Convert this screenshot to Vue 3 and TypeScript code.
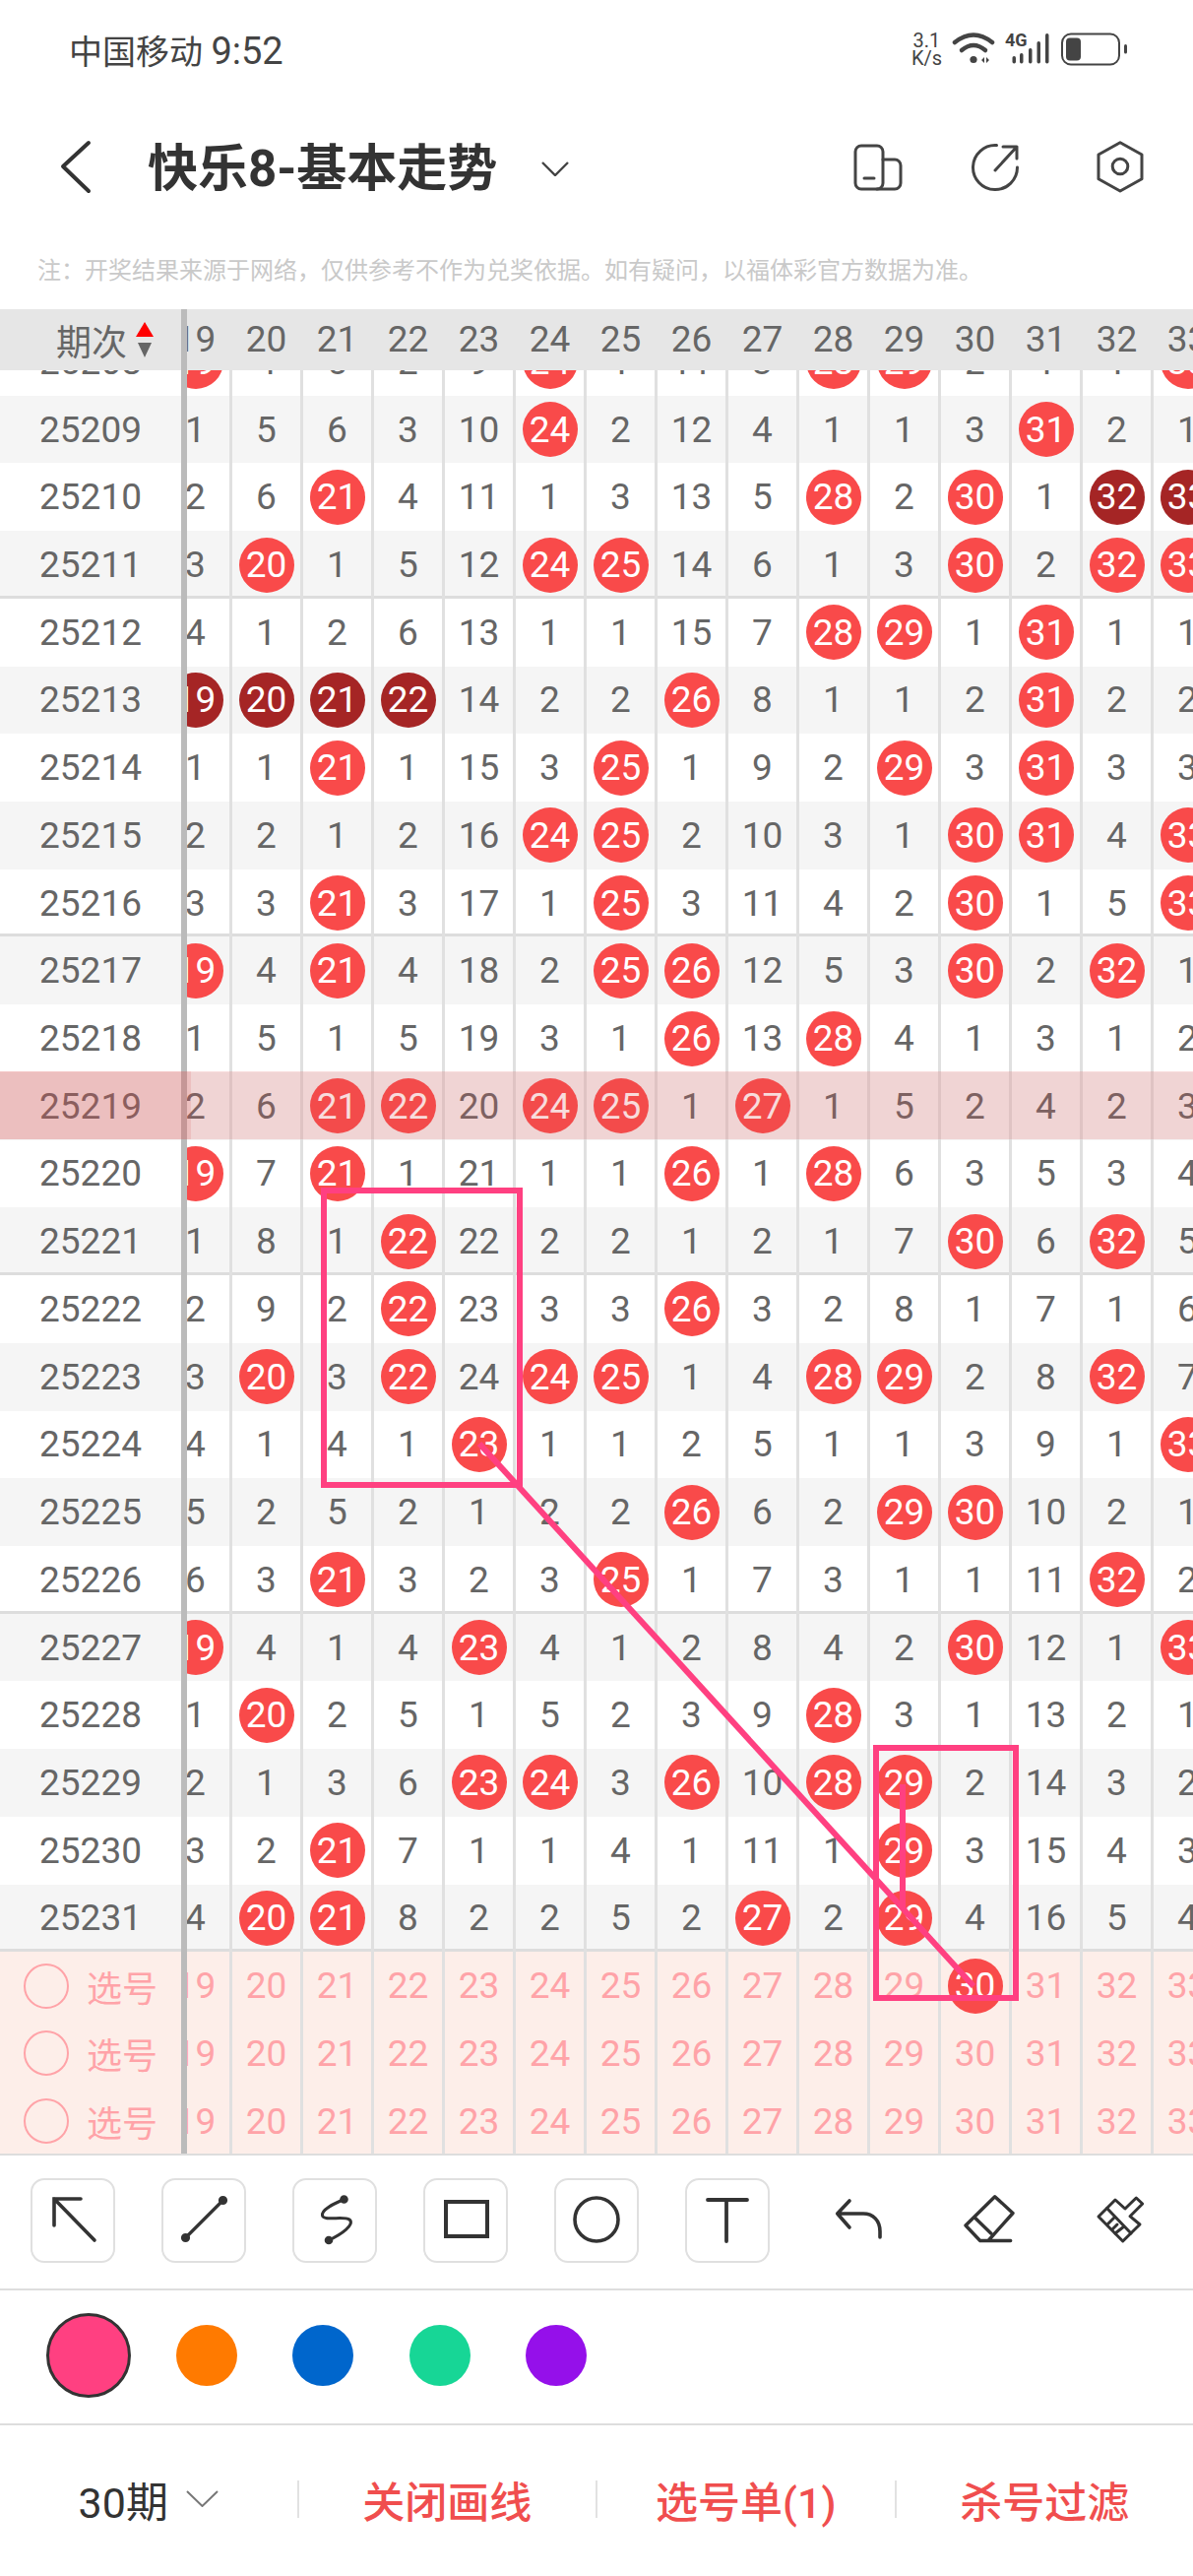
<template>
  <div class="page">
    <!-- status bar -->
    <div class="status">
      <span class="carrier">中国移动 <span class="clock">9:52</span></span>
      <div class="status-right">
        <div class="speed"><span>3.1</span><span>K/s</span></div>
        <svg class="wifi" width="46" height="40" viewBox="58 10 46 40">
          <path d="M62 23 Q81 8 100 23" fill="none" stroke="#444" stroke-width="4.5" stroke-linecap="round" />
          <path d="M69 31 Q81 21 93 31" fill="none" stroke="#444" stroke-width="4.5" stroke-linecap="round" />
          <circle cx="81" cy="40.5" r="3.6" fill="#444" />
          <path d="M89 41 l3 -3 v6z M94 38 l3 3 l-3 3z" fill="#444" />
        </svg>
        <svg class="signal" width="128" height="38" viewBox="1020 30 128 38">
          <text x="1021" y="46" class="net">4G</text>
          <g fill="#444">
            <rect x="1028.5" y="56" width="3.5" height="7.5" rx="1.7" />
            <rect x="1036" y="53" width="3.5" height="10.5" rx="1.7" />
            <rect x="1045" y="48" width="3.5" height="15.5" rx="1.7" />
            <rect x="1053.5" y="41" width="3.5" height="22.5" rx="1.7" />
            <rect x="1062" y="33" width="3.5" height="30.5" rx="1.7" />
          </g>
          <rect x="1079" y="33.5" width="58" height="31" rx="9" fill="none" stroke="#444" stroke-width="2" />
          <rect x="1083" y="37.5" width="15" height="23" rx="4" fill="#444" />
          <rect x="1142" y="44" width="3" height="9.5" rx="1.5" fill="#444" />
        </svg>
      </div>
    </div>

    <!-- nav bar -->
    <div class="nav">
      <svg class="back" width="36" height="60" viewBox="0 0 36 60">
        <path d="M32 5 L6 29 L32 54" fill="none" stroke="#333" stroke-width="4" stroke-linecap="round" stroke-linejoin="round" />
      </svg>
      <h1 class="title">快乐8-基本走势</h1>
      <svg class="title-caret" width="28" height="15" viewBox="0 0 28 15">
        <path d="M1 1 L14 14 L27 1" fill="none" stroke="#444" stroke-width="2.4" />
      </svg>
      <div class="nav-icons">
        <svg width="60" height="60" viewBox="0 0 60 60" fill="none" stroke="#444" stroke-width="3" stroke-linecap="round">
          <rect x="7" y="8" width="28" height="44" rx="6" />
          <path d="M35 22 H47 a6 6 0 0 1 6 6 V46 a6 6 0 0 1 -6 6 H29" />
          <path d="M16 41 h10" />
        </svg>
        <svg width="60" height="60" viewBox="0 0 60 60" fill="none" stroke="#444" stroke-width="3" stroke-linecap="round" stroke-linejoin="round">
          <path d="M31.5 7.6 A22.5 22.5 0 1 0 52.5 30" />
          <path d="M30 33 L52 9 M38 9 H52 V21" />
        </svg>
        <svg class="hex" width="60" height="60" viewBox="0 0 60 60" fill="none" stroke="#444" stroke-width="3" stroke-linejoin="round">
          <path d="M30 4.7 L52 17 V41.7 L30 54 L8 41.7 V17Z" />
          <circle cx="30" cy="29" r="7.8" />
        </svg>
      </div>
    </div>

    <p class="note">注&#xFF1A;开奖结果来源于网络&#xFF0C;仅供参考不作为兑奖依据。如有疑问&#xFF0C;以福体彩官方数据为准。</p>

    <!-- table header -->
    <div class="thead">
      <div class="thead-left">
        <span>期次</span>
        <svg width="18" height="38" viewBox="0 0 18 38">
          <path d="M9 1 L18 16 H0Z" fill="#f00" />
          <path d="M2 22 H16 L9 37Z" fill="#666" />
        </svg>
      </div>
      <div class="thead-nums">
        <span v-for="n in columns" :key="n" class="head-num">{{ n }}</span>
      </div>
    </div>

    <!-- table body, scrolled a bit so the first row is cut off -->
    <div class="grid">
      <div class="frozen">
        <div class="scrolled">
          <div
            v-for="(r, i) in rows"
            :key="r.id"
            class="row fz-cell"
            :class="{ zebra: i % 2 === 1, fifth: r.line }"
          >{{ r.id }}</div>
          <div v-for="p in 3" :key="p" class="row fz-cell pick">
            <span class="pick-ring"></span>
            <span>选号</span>
          </div>
        </div>
      </div>
      <div class="track">
        <div class="scrolled inner">
          <div
            v-for="(r, i) in rows"
            :key="r.id"
            class="row"
            :class="{ zebra: i % 2 === 1, fifth: r.line }"
          >
            <div v-for="c in r.cells" :key="c.col" class="cell">
              <span v-if="c.kind" class="ball" :class="c.kind">{{ c.text }}</span>
              <template v-else>{{ c.text }}</template>
            </div>
          </div>
          <div v-for="p in 3" :key="p" class="row pick">
            <div v-for="n in columns" :key="n" class="cell">
              <span v-if="p === 1 && n === 30" class="ball red">{{ n }}</span>
              <template v-else>{{ n }}</template>
            </div>
          </div>
        </div>
      </div>

      <!-- highlighted draw 25219 -->
      <div class="hl" :style="{ top: hlTop + 'px' }"></div>
      <div class="hl hl-left" :style="{ top: hlTop + 'px' }"></div>

      <!-- what the user drew on the chart -->
      <svg class="drawing" width="1212" height="1811" viewBox="0 376 1212 1811" fill="none" stroke="#ff4081" stroke-width="6">
        <rect x="329" y="1209" width="199" height="299" />
        <rect x="890" y="1775" width="142" height="254" />
        <path d="M487 1466 L989 2017" />
        <path d="M917 1812 V1937" />
      </svg>
    </div>

    <!-- drawing tools -->
    <div class="tools">
      <div class="tool boxed">
        <svg width="86" height="86" viewBox="0 0 86 86" fill="none" stroke="#333" stroke-width="3.6" stroke-linecap="round">
          <path d="M24 48 V21 H51 M24 21 L65 63" />
        </svg>
      </div>
      <div class="tool boxed">
        <svg width="86" height="86" viewBox="0 0 86 86" fill="none" stroke="#333" stroke-width="3.2">
          <path d="M62.5 22.5 L24.5 60.5" />
          <circle cx="62.5" cy="22.5" r="3" fill="#333" />
          <circle cx="24.5" cy="60.5" r="3" fill="#333" />
        </svg>
      </div>
      <div class="tool boxed">
        <svg width="86" height="86" viewBox="0 0 86 86" fill="none" stroke="#333" stroke-width="3">
          <path d="M52.5 21.5 C42 26 29 32 30.5 38 C32 44 52 38 58 42 C64 47 50 57 37 63" />
          <circle cx="52.5" cy="21.5" r="2.8" fill="#333" />
          <circle cx="37" cy="63" r="2.8" fill="#333" />
        </svg>
      </div>
      <div class="tool boxed">
        <svg width="86" height="86" viewBox="0 0 86 86" fill="none" stroke="#333" stroke-width="4">
          <rect x="23" y="24" width="42" height="35" />
        </svg>
      </div>
      <div class="tool boxed">
        <svg width="86" height="86" viewBox="0 0 86 86" fill="none" stroke="#333" stroke-width="3.6">
          <circle cx="43" cy="42" r="22" />
        </svg>
      </div>
      <div class="tool boxed">
        <svg width="86" height="86" viewBox="0 0 86 86" fill="none" stroke="#333" stroke-width="3.8" stroke-linecap="round">
          <path d="M23 22 H63 M42 22 V64" />
        </svg>
      </div>
      <div class="tool">
        <svg width="86" height="86" viewBox="0 0 86 86" fill="none" stroke="#333" stroke-width="3.6" stroke-linecap="round" stroke-linejoin="round">
          <path d="M34 23 L21.7 36 L34 50 M21.7 36 H48 C58 36 65 43 65 54 V60" />
        </svg>
      </div>
      <div class="tool">
        <svg width="86" height="86" viewBox="0 0 86 86" fill="none" stroke="#333" stroke-width="3.4" stroke-linecap="round" stroke-linejoin="round">
          <path d="M33.7 63.5 L19 48 L48.7 18.7 L67 35.5 L42 63.5 M33.7 63.5 H64.7 M28 39.7 L44.7 56" />
        </svg>
      </div>
      <div class="tool">
        <svg width="86" height="86" viewBox="0 0 86 86" fill="none" stroke="#333" stroke-width="3" stroke-linecap="round" stroke-linejoin="round">
          <path d="M59.3 20 L65.7 26 L53 38.7 L63 47 L45.7 64 L21 39 L38 22 L48 31Z" />
          <path d="M29.6 30.5 L54 56 M30 47 L37 40 M38 56 L47 49 M35 52 L40 47" />
        </svg>
      </div>
    </div>

    <!-- pen colours -->
    <div class="pens">
      <span
        v-for="(c, i) in pens"
        :key="c"
        class="pen"
        :class="{ active: i === 0 }"
        :style="{ backgroundColor: c }"
      ></span>
    </div>

    <!-- bottom actions -->
    <div class="actions">
      <div class="act plain">
        <span>30期</span>
        <svg width="33" height="17" viewBox="0 0 33 17">
          <path d="M1 1 L16.5 16 L32 1" fill="none" stroke="#777" stroke-width="2" />
        </svg>
      </div>
      <i class="sep"></i>
      <div class="act">关闭画线</div>
      <i class="sep"></i>
      <div class="act">选号单(1)</div>
      <i class="sep"></i>
      <div class="act">杀号过滤</div>
    </div>
  </div>
</template>

<script setup lang="ts">
type Cell = { col: number; text: string; kind: string }
type Row = { id: number; cells: Cell[]; line: boolean }

const firstCol = 19
const columns = Array.from({ length: 15 }, (_, i) => firstCol + i)
const pens = ['#ff4081', '#ff7a00', '#0066cc', '#17d696', '#9510ea']

const raw = [
  '19r 4 5 2 9 24r 1 11 3 28r 29r 2 1 1 33r',
  '1 5 6 3 10 24r 2 12 4 1 1 3 31r 2 1',
  '2 6 21r 4 11 1 3 13 5 28r 2 30r 1 32d 33d',
  '3 20r 1 5 12 24r 25r 14 6 1 3 30r 2 32r 33r',
  '4 1 2 6 13 1 1 15 7 28r 29r 1 31r 1 1',
  '19d 20d 21d 22d 14 2 2 26r 8 1 1 2 31r 2 2',
  '1 1 21r 1 15 3 25r 1 9 2 29r 3 31r 3 3',
  '2 2 1 2 16 24r 25r 2 10 3 1 30r 31r 4 33r',
  '3 3 21r 3 17 1 25r 3 11 4 2 30r 1 5 33r',
  '19r 4 21r 4 18 2 25r 26r 12 5 3 30r 2 32r 1',
  '1 5 1 5 19 3 1 26r 13 28r 4 1 3 1 2',
  '2 6 21r 22r 20 24r 25r 1 27r 1 5 2 4 2 3',
  '19r 7 21r 1 21 1 1 26r 1 28r 6 3 5 3 4',
  '1 8 1 22r 22 2 2 1 2 1 7 30r 6 32r 5',
  '2 9 2 22r 23 3 3 26r 3 2 8 1 7 1 6',
  '3 20r 3 22r 24 24r 25r 1 4 28r 29r 2 8 32r 7',
  '4 1 4 1 23r 1 1 2 5 1 1 3 9 1 33r',
  '5 2 5 2 1 2 2 26r 6 2 29r 30r 10 2 1',
  '6 3 21r 3 2 3 25r 1 7 3 1 1 11 32r 2',
  '19r 4 1 4 23r 4 1 2 8 4 2 30r 12 1 33r',
  '1 20r 2 5 1 5 2 3 9 28r 3 1 13 2 1',
  '2 1 3 6 23r 24r 3 26r 10 28r 29r 2 14 3 2',
  '3 2 21r 7 1 1 4 1 11 1 29r 3 15 4 3',
  '4 20r 21r 8 2 2 5 2 27r 2 29r 4 16 5 4',
]

const rows: Row[] = raw.map((line, i) => {
  const id = 25208 + i
  const cells = line.split(' ').map((tok, j) => {
    const flag = tok.slice(-1)
    if (flag === 'r') return { col: firstCol + j, text: tok.slice(0, -1), kind: 'red' }
    if (flag === 'd') return { col: firstCol + j, text: tok.slice(0, -1), kind: 'dark' }
    return { col: firstCol + j, text: tok, kind: '' }
  })
  return { id, cells, line: id % 5 === 1 }
})

const rowH = 68.73
const scrollTop = 44
const hlTop = rowH * 11 - scrollTop
</script>

<style>
html,
body {
  margin: 0;
  background: #fff;
}
</style>

<style scoped>
.page {
  width: 1212px;
  height: 2616px;
  overflow: hidden;
  font-family: Roboto, "Noto Sans CJK SC", sans-serif;
  color: #666;
  background: #fff;
}

.status {
  height: 100px;
  display: flex;
  align-items: center;
  justify-content: space-between;
  padding: 0 64px 0 70px;
  box-sizing: border-box;
}
.carrier {
  font-size: 34px;
  color: #444;
}
.clock {
  font-size: 38px;
}
.status-right {
  display: flex;
  align-items: center;
  gap: 8px;
}
.speed {
  display: flex;
  flex-direction: column;
  align-items: center;
  font-size: 20px;
  line-height: 18px;
  color: #444;
}
.wifi {
  margin-left: 1px;
}
.net {
  font-size: 18px;
  font-weight: 700;
  fill: #444;
  font-family: Roboto, sans-serif;
}

.nav {
  height: 140px;
  display: flex;
  align-items: center;
  padding-left: 58px;
  padding-right: 44px;
  box-sizing: border-box;
}
.title {
  margin: 3px 0 0 56px;
  font-size: 51px;
  line-height: 60px;
  font-weight: 700;
  color: #333;
  white-space: nowrap;
}
.title-caret {
  margin-left: 45px;
  margin-top: 2px;
}
.nav-icons {
  margin-left: auto;
  display: flex;
  gap: 59px;
}
.hex {
  margin-left: 8px;
}

.note {
  height: 74px;
  margin: 0;
  padding-left: 38px;
  font-size: 24px;
  line-height: 70px;
  color: #c9c9c9;
  white-space: nowrap;
}

.thead {
  height: 62px;
  display: flex;
  background: #e6e6e6;
  overflow: hidden;
}
.thead-left {
  width: 190px;
  flex: none;
  box-sizing: border-box;
  border-right: 6px solid #bbb;
  background: #e6e6e6;
  position: relative;
  z-index: 1;
  display: flex;
  align-items: center;
  padding-left: 57px;
  font-size: 36px;
  gap: 9px;
}
.thead-nums {
  display: flex;
  margin-left: -26px;
}
.head-num {
  width: 72px;
  flex: none;
  padding-right: 3px;
  box-sizing: border-box;
  text-align: center;
  font-size: 37px;
  line-height: 62px;
}

.grid {
  position: relative;
  height: 1811px;
  display: flex;
  overflow: hidden;
}
.scrolled {
  margin-top: -43px;
}
.frozen {
  width: 190px;
  flex: none;
  box-sizing: border-box;
  border-right: 6px solid #bbb;
  background: #fff;
  position: relative;
  z-index: 1;
}
.track {
  flex: 1;
  min-width: 0;
  overflow: hidden;
}
.inner {
  margin-left: -26px;
  width: 1080px;
}
.row {
  height: 68.73px;
  display: flex;
  font-size: 37px;
  color: #666;
}
.zebra {
  background: #f5f5f5;
}
.fifth {
  box-shadow: inset 0 -3px 0 #ddd;
}
.fz-cell {
  align-items: center;
  justify-content: center;
}
.pick {
  background: #fdeee9;
  color: #ffa3a8;
}
.fz-cell.pick {
  justify-content: flex-start;
  padding-left: 24px;
  font-size: 36px;
  gap: 18px;
}
.pick-ring {
  width: 46px;
  height: 46px;
  box-sizing: border-box;
  border: 2.5px solid #ffa3a8;
  border-radius: 50%;
}
.cell {
  width: 72px;
  flex: none;
  box-sizing: border-box;
  border-right: 3px solid #e0e0e0;
  display: flex;
  align-items: center;
  justify-content: center;
}
.ball {
  width: 56px;
  height: 56px;
  flex: none;
  border-radius: 50%;
  color: #fff;
  display: flex;
  align-items: center;
  justify-content: center;
}
.red {
  background: #f94a4a;
}
.dark {
  background: #a52525;
}

.hl {
  position: absolute;
  left: 0;
  right: 0;
  height: 68.73px;
  background: rgba(220, 80, 80, 0.2);
  z-index: 2;
  pointer-events: none;
}
.hl-left {
  right: auto;
  width: 194px;
  background: rgba(220, 80, 80, 0.16);
}
.drawing {
  position: absolute;
  left: 0;
  top: 0;
  z-index: 3;
  pointer-events: none;
}

.tools {
  height: 137px;
  box-sizing: border-box;
  border-top: 2px solid #ddd;
  padding: 23px 0 0 31px;
  display: flex;
  gap: 47px;
}
.tool {
  width: 86px;
  height: 86px;
  flex: none;
  position: relative;
}
.tool svg {
  position: absolute;
  left: 0;
  top: 0;
}
.boxed::after {
  content: "";
  position: absolute;
  inset: 0;
  border: 2px solid #e0e0e0;
  border-radius: 14px;
}

.pens {
  height: 137px;
  box-sizing: border-box;
  border-top: 2px solid #ddd;
  display: flex;
  align-items: center;
  padding-left: 47px;
  padding-bottom: 3px;
  gap: 56.6px;
}
.pen {
  width: 62px;
  height: 62px;
  border-radius: 50%;
  flex: none;
}
.pen.active {
  width: 86px;
  height: 86px;
  box-sizing: border-box;
  border: 3px solid #333;
  margin-right: -11px;
}

.actions {
  height: 155px;
  box-sizing: border-box;
  border-top: 2px solid #ddd;
  padding-bottom: 4px;
  display: flex;
  align-items: center;
}
.act {
  flex: 1;
  text-align: center;
  font-size: 43px;
  font-weight: 500;
  color: #f04e4e;
  white-space: nowrap;
}
.act.plain {
  display: flex;
  align-items: center;
  justify-content: center;
  gap: 18px;
  color: #333;
  font-weight: 400;
}
.sep {
  width: 2px;
  height: 38px;
  background: #e2e2e2;
  flex: none;
}
</style>
